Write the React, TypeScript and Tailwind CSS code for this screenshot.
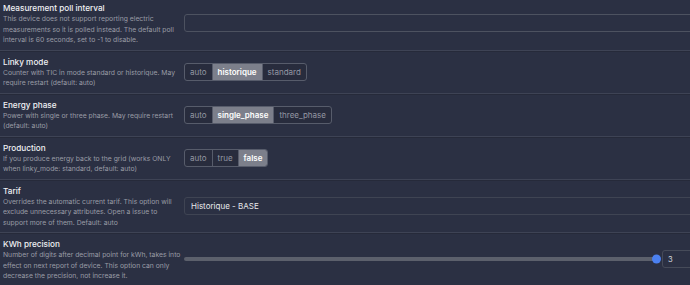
import React from "react";

type Seg = { options: string[]; value: string };

const rows: {
  title: string;
  desc: string[];
  kind: "input" | "seg" | "select" | "slider";
  seg?: Seg;
}[] = [
  {
    title: "Measurement poll interval",
    desc: [
      "This device does not support reporting electric",
      "measurements so it is polled instead. The default poll",
      "interval is 60 seconds, set to -1 to disable.",
    ],
    kind: "input",
  },
  {
    title: "Linky mode",
    desc: ["Counter with TIC in mode standard or historique. May", "require restart (default: auto)"],
    kind: "seg",
    seg: { options: ["auto", "historique", "standard"], value: "historique" },
  },
  {
    title: "Energy phase",
    desc: ["Power with single or three phase. May require restart", "(default: auto)"],
    kind: "seg",
    seg: { options: ["auto", "single_phase", "three_phase"], value: "single_phase" },
  },
  {
    title: "Production",
    desc: ["If you produce energy back to the grid (works ONLY", "when linky_mode: standard, default: auto)"],
    kind: "seg",
    seg: { options: ["auto", "true", "false"], value: "false" },
  },
  {
    title: "Tarif",
    desc: [
      "Overrides the automatic current tarif. This option will",
      "exclude unnecessary attributes. Open a issue to",
      "support more of them. Default: auto",
    ],
    kind: "select",
  },
  {
    title: "KWh precision",
    desc: [
      "Number of digits after decimal point for kWh, takes into",
      "effect on next report of device. This option can only",
      "decrease the precision, not increase it.",
    ],
    kind: "slider",
  },
];

const Segmented = ({ options, value }: Seg) => (
  <div className="flex h-[18px] overflow-hidden rounded-[3px] border border-[#575c6b] bg-[#282c3d]">
    {options.map((o, i) => (
      <div
        key={o}
        className={
          "flex items-center px-[5px] text-[8px] " +
          (i > 0 ? "border-l border-[#575c6b] " : "") +
          (o === value
            ? "bg-[#7c7f8b] font-semibold text-white"
            : "text-[#9497a3]")
        }
      >
        {o}
      </div>
    ))}
  </div>
);

const Control = ({ kind, seg }: { kind: string; seg?: Seg }) => {
  if (kind === "input")
    return (
      <div className="h-[18px] w-[520px] rounded-[3px] border border-[#4d5260]" />
    );
  if (kind === "seg" && seg) return <Segmented {...seg} />;
  if (kind === "select")
    return (
      <div className="flex h-[18px] w-[520px] items-center rounded-[3px] border border-[#3f4453] px-[6px] text-[8px] text-[#e8e9ec]">
        Historique - BASE
      </div>
    );
  return (
    <div className="flex w-[520px] items-center">
      <div className="relative h-[4px] w-[472px] rounded-full bg-[#5c606c]">
        <div className="absolute right-[-5px] top-1/2 h-[9px] w-[9px] -translate-y-1/2 rounded-full bg-[#4b80f0]" />
      </div>
      <div className="ml-[6px] flex h-[18px] flex-1 items-center rounded-l-[3px] border border-[#464b59] px-[5px] text-[7.6px] text-[#d4d6dc]">
        3
      </div>
    </div>
  );
};

export default function App() {
  return (
    <div className="h-[285px] w-[690px] overflow-hidden bg-[#2b3043] font-['Inter',sans-serif]">
      <div className="-mt-[3px]">
        {rows.map((r, i) => (
          <div
            key={r.title}
            className={
              "flex items-center pl-[3px] " +
              (i > 0 ? "border-t border-[#3e4355] shadow-[inset_0_1px_0_#262a3a]" : "")
            }
          >
            <div className="w-[180px] shrink-0 pb-[4px] pt-[5px]">
              <div className="text-[8.2px] font-medium leading-[12px] text-[#f0f1f4]">{r.title}</div>
              <div className="text-[6.8px] leading-[10.5px] text-[#9a9ca6]">
                {r.desc.map((l) => (
                  <div key={l} className="whitespace-nowrap">
                    {l}
                  </div>
                ))}
              </div>
            </div>
            <div className="ml-[1px]">
              <Control kind={r.kind} seg={r.seg} />
            </div>
          </div>
        ))}
      </div>
    </div>
  );
}
